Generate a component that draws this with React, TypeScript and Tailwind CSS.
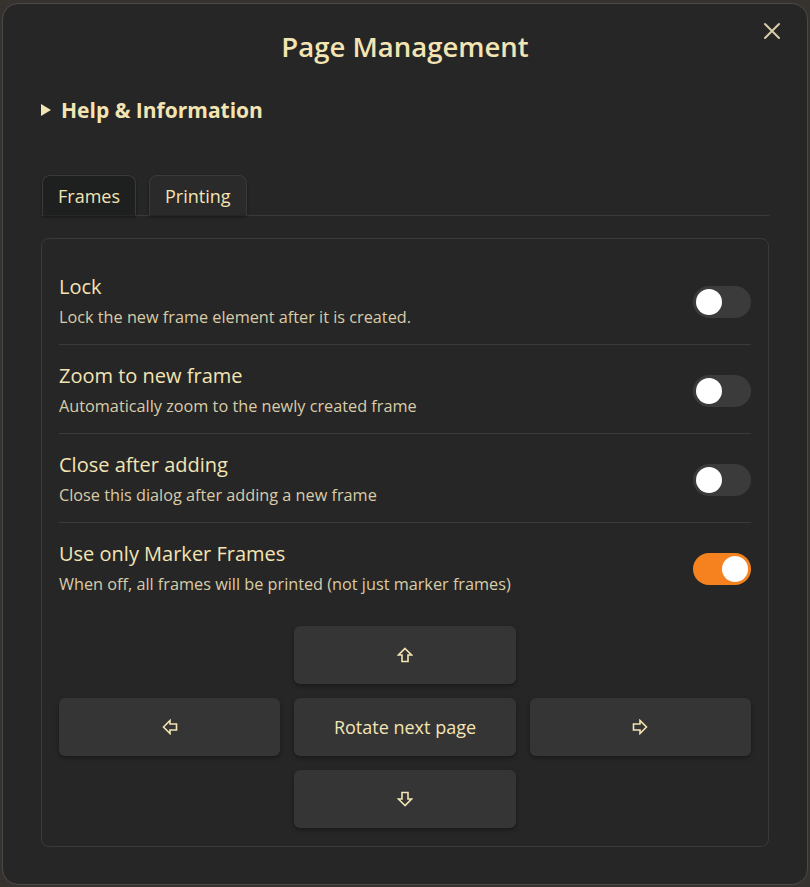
import React from "react";

const cream = "text-[#f3e4b4]";

function Toggle({ on }: { on?: boolean }) {
  return (
    <div
      className={
        "w-[58px] h-[32px] rounded-full flex items-center px-[3px] shrink-0 " +
        (on ? "bg-[#f5821f] justify-end" : "bg-[#3b3b3b] justify-start")
      }
    >
      <div className="w-[26px] h-[26px] rounded-full bg-white" />
    </div>
  );
}

function Row({ title, desc, on, last }: { title: string; desc: string; on?: boolean; last?: boolean }) {
  return (
    <div className={"flex items-center justify-between pt-[18px] pb-[15px] " + (last ? "" : "border-b border-[#3a3a3a]")}>
      <div className="flex flex-col gap-[5px]">
        <div className={"text-[20px] leading-[26px] " + cream}>{title}</div>
        <div className="text-[16.25px] leading-[24px] text-[#d9cca8]">{desc}</div>
      </div>
      <Toggle on={on} />
    </div>
  );
}

function Arrow({ dir }: { dir: "up" | "down" | "left" | "right" }) {
  const rot = { up: 0, right: 90, down: 180, left: 270 }[dir];
  return (
    <svg width="16" height="16" viewBox="0 0 16 16" style={{ transform: `rotate(${rot}deg)` }}>
      <path
        d="M8 1.5 L14.5 8 L11 8 L11 14.5 L5 14.5 L5 8 L1.5 8 Z"
        fill="none"
        stroke="#f3e4b4"
        strokeWidth="1.6"
        strokeLinejoin="miter"
      />
    </svg>
  );
}

function Btn({ children }: { children?: React.ReactNode }) {
  return (
    <div className="h-[58px] rounded-[6px] bg-[#353535] flex items-center justify-center shadow-[0_2px_4px_rgba(0,0,0,0.35)] text-[18px] text-[#f3e4b4]">
      {children}
    </div>
  );
}

export default function App() {
  return (
    <div
      className="w-full h-[887px] bg-[#36322e] pt-[3px] px-[2px]"
      style={{ fontFamily: '"Open Sans", "Noto Sans", sans-serif' }}
    >
      <div className="relative h-[882px] rounded-[16px] border border-[#4a4a4a] bg-[#262626] px-[38px] pt-[27px]">
        <button className="absolute right-[24px] top-[16px] w-[22px] h-[22px] flex items-center justify-center">
          <svg width="18" height="18" viewBox="0 0 18 18">
            <path d="M2 2 L16 16 M16 2 L2 16" stroke="#d9cca8" strokeWidth="2" strokeLinecap="round" />
          </svg>
        </button>
        <h1 className={"text-center text-[27.5px] leading-[32px] font-semibold " + cream}>Page Management</h1>
        <div className={"mt-[33px] flex items-center gap-[10px] " + cream}>
          <svg width="10" height="12" viewBox="0 0 10 12">
            <path d="M0 0 L10 6 L0 12 Z" fill="#f3e4b4" />
          </svg>
          <span className="text-[21px] leading-[28px] font-bold">Help &amp; Information</span>
        </div>

        <div className="mt-[51px] flex gap-[14px] border-b border-[#3a3a3a]">
          <div className="ml-[1px] h-[40px] pt-[1px] px-[15px] rounded-t-[8px] border border-b-0 border-[#3a3a3a] bg-[#1d201f] flex items-center text-[18px] text-[#f3e4b4] shadow-[0_2px_3px_rgba(0,0,0,0.4)]">
            Frames
          </div>
          <div className="-ml-[1px] h-[40px] pt-[1px] px-[15px] rounded-t-[8px] border border-b-0 border-[#3a3a3a] bg-[#2a2a2a] flex items-center text-[18px] text-[#f3e4b4] shadow-[0_2px_3px_rgba(0,0,0,0.4)]">
            Printing
          </div>
        </div>

        <div className="mt-[22px] border border-[#3a3a3a] rounded-[8px] px-[17px] pt-[17px] pb-[18px]">
          <Row title="Lock" desc="Lock the new frame element after it is created." />
          <Row title="Zoom to new frame" desc="Automatically zoom to the newly created frame" />
          <Row title="Close after adding" desc="Close this dialog after adding a new frame" />
          <Row title="Use only Marker Frames" desc="When off, all frames will be printed (not just marker frames)" on last />

          <div className="mt-[15px] grid grid-cols-3 gap-x-[14px] gap-y-[14px]">
            <div />
            <Btn><Arrow dir="up" /></Btn>
            <div />
            <Btn><Arrow dir="left" /></Btn>
            <Btn>Rotate next page</Btn>
            <Btn><Arrow dir="right" /></Btn>
            <div />
            <Btn><Arrow dir="down" /></Btn>
            <div />
          </div>
        </div>
      </div>
    </div>
  );
}
